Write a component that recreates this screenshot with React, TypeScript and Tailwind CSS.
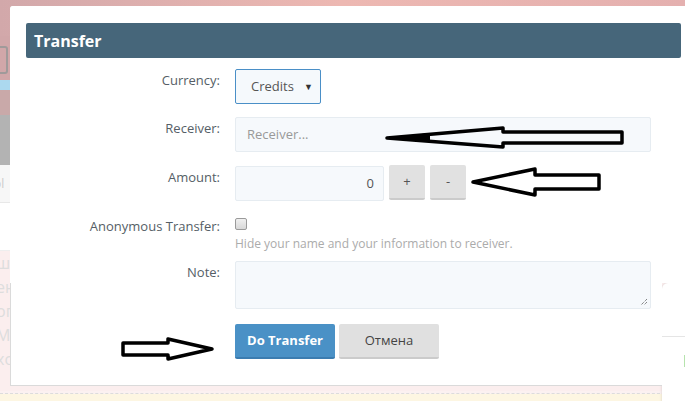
import React from "react";

function Arrows() {
  return (
    <svg className="absolute left-0 top-0" width={685} height={401} viewBox="0 0 685 401">
      <g fill="none" stroke="#000" strokeWidth={3.5} strokeLinejoin="round">
        <polygon points="387,138 503,128 503,132 622,132 622,143 503,143 503,147" />
        <polygon points="473,182 535,169 535,175 599,175 599,189 535,189 535,195" />
        <polygon points="212,349 168,339 168,343 123,343 123,355 168,355 168,359" />
      </g>
      <g fill="#000">
        <polygon points="387,138 430,133 430,142" />
      </g>
    </svg>
  );
}

function Label({ children }: { children: React.ReactNode }) {
  return (
    <div className="w-[194px] shrink-0 text-right text-[13px] leading-[18px] text-[#555e66] pt-[2px]">
      {children}
    </div>
  );
}

export default function App() {
  return (
    <div
      className="relative w-[685px] h-[401px] overflow-hidden bg-white"
      style={{ fontFamily: '"Open Sans", "Noto Sans", sans-serif' }}
    >
      {/* background page */}
      <div className="absolute inset-0 flex flex-col">
        <div className="h-[36px] bg-gradient-to-r from-[#d2a8aa] via-[#edb8b2] to-[#e4b0af]" />
        <div className="h-[44px] bg-[#d1a7a9] relative">
          <div className="absolute left-[-10px] top-[10px] w-[18px] h-[28px] rounded-[3px] border-2 border-[#a09a9a]" />
        </div>
        <div className="h-[10px] bg-[#acd9ef]" />
        <div className="h-[25px] bg-[#c9a9a9]" />
        <div className="h-[50px] bg-[#b3b3b3]" />
        <div className="h-[38px] bg-[#f7f7f7] border-b border-[#e8e8e8] text-[12px] text-[#ccc] pt-[10px]">
          <span className="ml-[-6px]">ol</span>
        </div>
        <div className="h-[48px] bg-white border-b border-[#eee]" />
        <div className="h-[140px] bg-[#fbeeee] flex flex-col text-[16px] leading-[24px] text-[#ddd]">
          <span className="ml-[-4px]">ш</span>
          <span className="ml-[-4px]">ен</span>
          <span className="ml-[-4px]">оп</span>
          <span className="ml-[-4px]">Ма</span>
          <span className="ml-[-4px]">хо</span>
        </div>
        <div className="h-[3px] bg-[#fbf1f1] border-b border-dashed border-[#dcdcdc]" />
        <div className="flex-1 bg-[#fdf6e2]" />
      </div>

      {/* right card */}
      <div className="absolute left-[662px] top-[283px] w-[40px] h-[130px] bg-white rounded-tl-[6px] shadow-[0_0_3px_rgba(0,0,0,0.15)]">
        <div className="h-[54px] border-b border-[#e5e5e5]" />
        <div className="ml-[22px] mt-[18px] w-[2px] h-[12px] bg-[#b6e3ad]" />
      </div>

      {/* modal */}
      <div className="absolute left-[10px] top-[6px] w-[652px] h-[380px] bg-white border-l border-b border-[#dadada] rounded-tl-[3px]" />
      <div className="absolute left-[10px] top-[6px] w-[690px] h-[277px] bg-white rounded-tl-[3px] pl-[16px] pt-[17px]">
        <div className="w-[655px] h-[35px] bg-[#46667a] rounded-[2px] pl-[8px] flex items-center text-white font-bold text-[16px]">
          Transfer
        </div>
      </div>

      <div className="absolute left-[26px] top-[69px] flex flex-col">
        {/* Currency */}
        <div className="flex gap-[15px] h-[35px]">
          <Label>Currency:</Label>
          <div className="w-[86px] h-[35px] border border-[#4a8fc7] rounded-[2px] bg-[#f5f9fc] flex items-center pl-[15px] pr-[7px] text-[13px] text-[#555]">
            <span className="flex-1">Credits</span>
            <span className="text-[9px] text-[#333]">▼</span>
          </div>
        </div>
        {/* Receiver */}
        <div className="flex gap-[15px] h-[35px] mt-[13px]">
          <Label>Receiver:</Label>
          <div className="w-[416px] h-[35px] border border-[#e6ecf1] rounded-[2px] bg-[#f6f9fc] flex items-center pl-[11px] text-[13px] text-[#999]">
            Receiver...
          </div>
        </div>
        {/* Amount */}
        <div className="flex gap-[15px] h-[35px] mt-[14px]">
          <Label>Amount:</Label>
          <div className="flex gap-[5px]">
            <div className="w-[149px] h-[35px] border border-[#e6ecf1] rounded-[2px] bg-[#f6f9fc] flex items-center justify-end pr-[9px] text-[13px] text-[#555]">
              0
            </div>
            <div className="w-[36px] h-[35px] mt-[-1px] rounded-[2px] bg-[#e1e1e1] border-b-2 border-[#cbcbcb] flex items-center justify-center text-[13px] text-[#555]">
              +
            </div>
            <div className="w-[36px] h-[35px] mt-[-1px] rounded-[2px] bg-[#e1e1e1] border-b-2 border-[#cbcbcb] flex items-center justify-center text-[13px] text-[#555]">
              -
            </div>
          </div>
        </div>
        {/* Anonymous */}
        <div className="flex gap-[15px] mt-[14px] h-[46px]">
          <Label>Anonymous Transfer:</Label>
          <div className="flex flex-col">
            <div className="w-[12px] h-[12px] mt-[3px] rounded-[2px] border border-[#9a9a9a] bg-gradient-to-b from-[#f0f0f0] to-[#d8d8d8]" />
            <div className="text-[12px] leading-[16px] mt-[6px] text-[#ababab]">
              Hide your name and your information to receiver.
            </div>
          </div>
        </div>
        {/* Note */}
        <div className="flex gap-[15px] h-[48px]">
          <Label>Note:</Label>
          <div className="relative w-[416px] h-[48px] border border-[#e6ecf1] rounded-[2px] bg-[#f6f9fc]">
            <svg className="absolute right-[2px] bottom-[2px]" width={8} height={8} viewBox="0 0 8 8">
              <path d="M7 1 L1 7 M7 4 L4 7" stroke="#555" strokeWidth={1} strokeDasharray="1 1" />
            </svg>
          </div>
        </div>
        {/* Buttons */}
        <div className="flex gap-[15px] h-[36px] mt-[15px]">
          <div className="w-[194px] shrink-0" />
          <div className="flex gap-[4px]">
            <div className="w-[100px] h-[35px] rounded-[2px] bg-[#4a91c6] border-b-2 border-[#3b7cb0] flex items-center justify-center text-white font-bold text-[13px]">
              Do Transfer
            </div>
            <div className="w-[100px] h-[35px] rounded-[2px] bg-[#e0e0e0] border-b-2 border-[#cbcbcb] flex items-center justify-center text-[#444] text-[13px]">
              Отмена
            </div>
          </div>
        </div>
      </div>

      <Arrows />
    </div>
  );
}
